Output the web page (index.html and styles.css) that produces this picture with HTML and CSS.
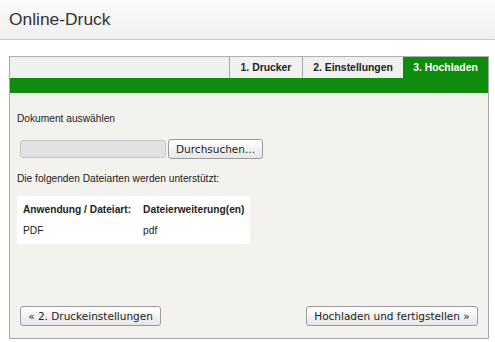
FILE: index.html
```html
<!DOCTYPE html>
<html lang="de">
<head>
<meta charset="utf-8">
<title>Online-Druck</title>
<link rel="stylesheet" href="styles.css">
</head>
<body>
<header class="header">
  <h1 class="title">Online-Druck</h1>
</header>
<main class="panel">
  <nav class="tabs">
    <div class="tab tab-1">1. Drucker</div>
    <div class="tab tab-2">2. Einstellungen</div>
    <div class="tab tab-active">3. Hochladen</div>
  </nav>
  <div class="greenbar"></div>
  <section class="content">
    <p class="label">Dokument auswählen</p>
    <div class="file-row">
      <span class="file-box"></span>
      <button class="btn btn-browse" type="button">Durchsuchen...</button>
    </div>
    <p class="label label-types">Die folgenden Dateiarten werden unterstützt:</p>
    <table class="types">
      <thead>
        <tr><th>Anwendung / Dateiart:</th><th>Dateierweiterung(en)</th></tr>
      </thead>
      <tbody>
        <tr><td>PDF</td><td>pdf</td></tr>
      </tbody>
    </table>
    <div class="actions">
      <button class="btn btn-back" type="button">« 2. Druckeinstellungen</button>
      <button class="btn btn-next" type="button">Hochladen und fertigstellen »</button>
    </div>
  </section>
</main>
</body>
</html>
```

FILE: styles.css
```css
* { box-sizing: border-box; }
html, body { margin: 0; padding: 0; background: #ffffff; }
body {
  font-family: "Liberation Sans", Arial, sans-serif;
  color: #222;
  width: 495px;
  height: 342px;
  overflow: hidden;
}
.header {
  height: 40px;
  background: linear-gradient(#fbfbfb, #f0f0f0);
  border-bottom: 1px solid #c8c8c8;
  padding-left: 9px;
}
.title {
  margin: 0;
  font-weight: normal;
  font-size: 17.4px;
  line-height: 38px;
  color: #333;
}
.panel {
  margin: 16px 0 0 9px;
  width: 480px;
  height: 283px;
  border: 1px solid #a8a8a8;
  border-top-color: #b0b0b0;
  display: flex;
  flex-direction: column;
  background: #f3f2ee;
}
.tabs {
  display: flex;
  justify-content: flex-end;
  height: 21px;
  background: #f0f0f0;
}
.tab {
  font-size: 10.4px;
  font-weight: bold;
  line-height: 21px;
  color: #222;
  border-left: 1px solid #a8a8a8;
  text-align: center;
}
.tab-1 { width: 73px; }
.tab-2 { width: 101px; }
.tab-active {
  width: 85px;
  background: #0d8c0d;
  color: #ffffff;
  border-left: none;
}
.greenbar {
  height: 15px;
  background: #0d8c0d;
}
.content {
  flex: 1;
  display: flex;
  flex-direction: column;
  padding: 19px 10px 12px 7px;
}
.label {
  margin: 0;
  font-size: 10.2px;
  line-height: 14px;
  color: #222;
}
.file-row {
  display: flex;
  align-items: center;
  margin: 13px 0 0 3px;
  gap: 2px;
}
.file-box {
  width: 146px;
  height: 18px;
  background: #e2e2e2;
  border: 1px solid #c4c4c4;
  border-radius: 3px;
}
.btn {
  font-family: "DejaVu Sans", Verdana, sans-serif;
  font-size: 10.5px;
  color: #222;
  height: 20px;
  padding: 0;
  background: linear-gradient(#ffffff, #e6e6e6);
  border: 1px solid #9a9a9a;
  border-radius: 3px;
  line-height: 18px;
  white-space: nowrap;
}
.btn-browse { width: 95px; }
.label-types { margin-top: 13px; }
.types {
  margin-top: 10px;
  border-collapse: collapse;
  background: #ffffff;
  font-size: 10.2px;
  width: 231px;
}
.types th, .types td {
  text-align: left;
  padding: 0 6px;
  height: 24px;
  white-space: nowrap;
}
.types th:first-child, .types td:first-child { width: 120px; }
.types th { font-weight: bold; padding-top: 2px; }
.types td { vertical-align: middle; padding-bottom: 4px; }
.actions {
  margin-top: auto;
  display: flex;
  justify-content: space-between;
  padding-left: 3px;
}
.btn-back { width: 141px; }
.btn-next { width: 172px; }
```
